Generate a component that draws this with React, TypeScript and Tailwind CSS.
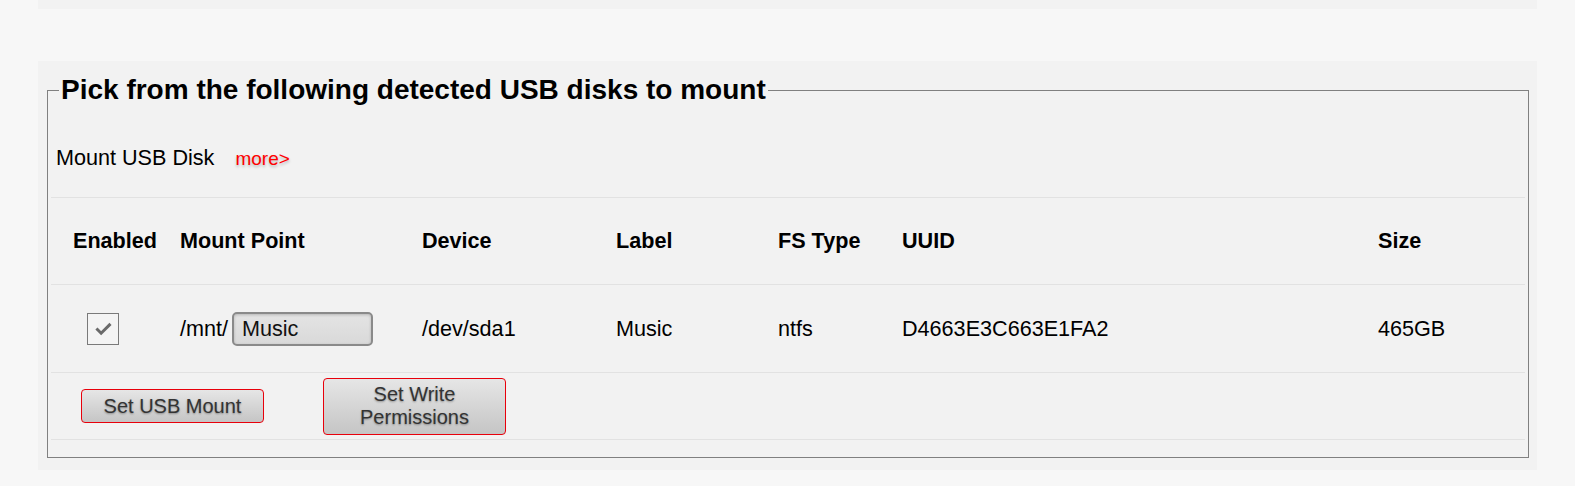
import { useState } from 'react';

type Disk = {
  mount: string;
  device: string;
  label: string;
  fsType: string;
  uuid: string;
  size: string;
};

const disks: Disk[] = [
  { mount: 'Music', device: '/dev/sda1', label: 'Music', fsType: 'ntfs', uuid: 'D4663E3C663E1FA2', size: '465GB' },
];

const cols = 'grid grid-cols-[129px_242px_194px_162px_124px_476px_1fr] items-center';

function CheckBox({ checked, onToggle }: { checked: boolean; onToggle: () => void }) {
  return (
    <button
      type="button"
      onClick={onToggle}
      className="w-[32px] h-[32px] border border-[#7a7a7a] bg-[#f4f4f4] flex items-center justify-center"
    >
      {checked && (
        <svg width="32" height="32" viewBox="0 0 32 32">
          <path d="M9 15.5 L14 20.5 L24 10.5" fill="none" stroke="#6a6a6a" strokeWidth="3.2" />
        </svg>
      )}
    </button>
  );
}

function GrayButton({ children, className = '' }: { children: React.ReactNode; className?: string }) {
  return (
    <button
      type="button"
      className={`w-[183px] border border-[#e8000b] rounded-[4px] bg-gradient-to-b from-[#e6e6e6] to-[#c5c5c5] text-[20px] leading-[23px] text-[#333] [text-shadow:0_1px_2px_rgba(0,0,0,0.35)] ${className}`}
    >
      {children}
    </button>
  );
}

export default function App() {
  const [enabled, setEnabled] = useState<boolean[]>(disks.map(() => true));

  return (
    <div className="min-h-[486px] bg-[#f7f7f7] font-['Liberation_Sans',Arial,sans-serif] text-black">
      <div className="mx-[38px] h-[9px] bg-[#f2f2f2]" />

      <div className="mx-[38px] mt-[52px] bg-[#f2f2f2] pt-[8px] pl-[9px] pr-[8px] pb-[12px]">
        <fieldset className="border border-[#808080] px-[3px] pb-[17px]">
          <legend className="ml-[8px] px-[2px] text-[28px] font-bold leading-normal">
            Pick from the following detected USB disks to mount
          </legend>

          <div className="pt-[31px] pb-[23px] text-[21.6px] leading-normal pl-[5px]">
            Mount USB Disk
            <a href="#" className="ml-[21px] text-[19px] text-[#ff0000] [text-shadow:0_2px_3px_rgba(0,0,0,0.25)]">
              more&gt;
            </a>
          </div>

          <div className={`${cols} h-[87px] border-t border-[#e2e2e2] text-[21.6px] font-bold`}>
            <div className="pl-[22px]">Enabled</div>
            <div>Mount Point</div>
            <div>Device</div>
            <div>Label</div>
            <div>FS Type</div>
            <div>UUID</div>
            <div>Size</div>
          </div>

          {disks.map((d, i) => (
            <div key={d.device} className={`${cols} h-[88px] border-t border-[#e2e2e2] text-[21.6px]`}>
              <div className="pl-[36px] flex">
                <CheckBox
                  checked={enabled[i]}
                  onToggle={() => setEnabled(enabled.map((v, j) => (j === i ? !v : v)))}
                />
              </div>
              <div className="flex items-center gap-[4px]">
                <span>/mnt/</span>
                <input
                  readOnly
                  value={d.mount}
                  className="w-[141px] h-[34px] border-2 border-[#8a8a8a] rounded-[5px] bg-gradient-to-b from-[#e4e4e4] to-[#d9d9d9] shadow-[inset_0_1px_3px_rgba(0,0,0,0.2)] px-[8px] text-[21.6px] text-[#111] outline-none"
                />
              </div>
              <div>{d.device}</div>
              <div>{d.label}</div>
              <div>{d.fsType}</div>
              <div>{d.uuid}</div>
              <div>{d.size}</div>
            </div>
          ))}

          <div className="h-[68px] border-y border-[#e2e2e2] flex items-center pl-[30px] gap-[59px]">
            <GrayButton className="h-[34px]">Set USB Mount</GrayButton>
            <GrayButton className="h-[57px]">
              Set Write
              <br />
              Permissions
            </GrayButton>
          </div>
        </fieldset>
      </div>
    </div>
  );
}
